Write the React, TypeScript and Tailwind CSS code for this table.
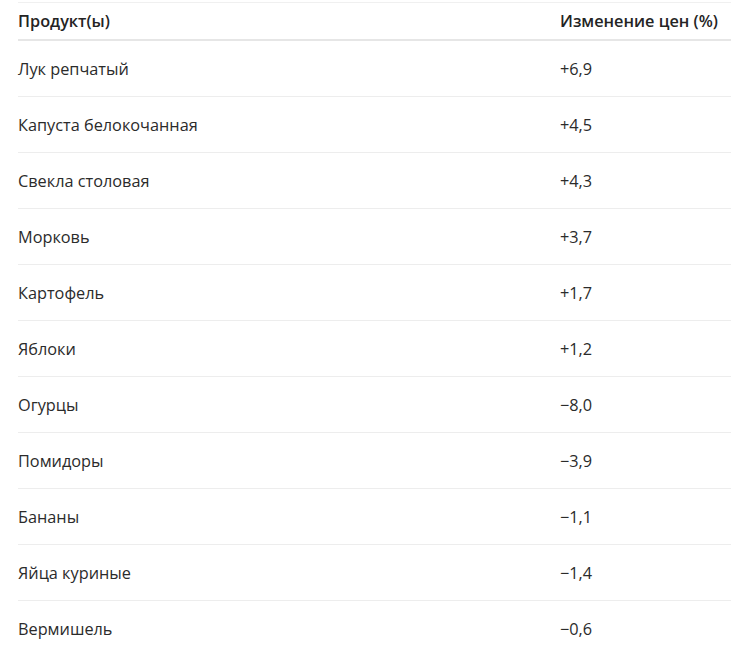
import React from "react";

const rows: [string, string][] = [
  ["Лук репчатый", "+6,9"],
  ["Капуста белокочанная", "+4,5"],
  ["Свекла столовая", "+4,3"],
  ["Морковь", "+3,7"],
  ["Картофель", "+1,7"],
  ["Яблоки", "+1,2"],
  ["Огурцы", "−8,0"],
  ["Помидоры", "−3,9"],
  ["Бананы", "−1,1"],
  ["Яйца куриные", "−1,4"],
  ["Вермишель", "−0,6"],
];

export default function App() {
  return (
    <div className="w-[731px] h-[647px] overflow-hidden bg-white pl-[18px] pt-[2px]" style={{ fontFamily: '"Open Sans", "Noto Sans", sans-serif' }}>
      <div className="border-t border-[#f0f0f0]">
        <div className="flex h-[38px] items-center border-b-2 border-[#e6e6e6] text-[16.3px] font-semibold text-[#242424]">
          <div className="w-[542px]">Продукт(ы)</div>
          <div>Изменение цен (%)</div>
        </div>
        {rows.map(([name, val]) => (
          <div key={name} className="flex h-[56px] items-center border-b border-[#ededed] pt-[1px] text-[16.3px] text-[#2b2b2b]">
            <div className="w-[542px]">{name}</div>
            <div>{val}</div>
          </div>
        ))}
      </div>
    </div>
  );
}
